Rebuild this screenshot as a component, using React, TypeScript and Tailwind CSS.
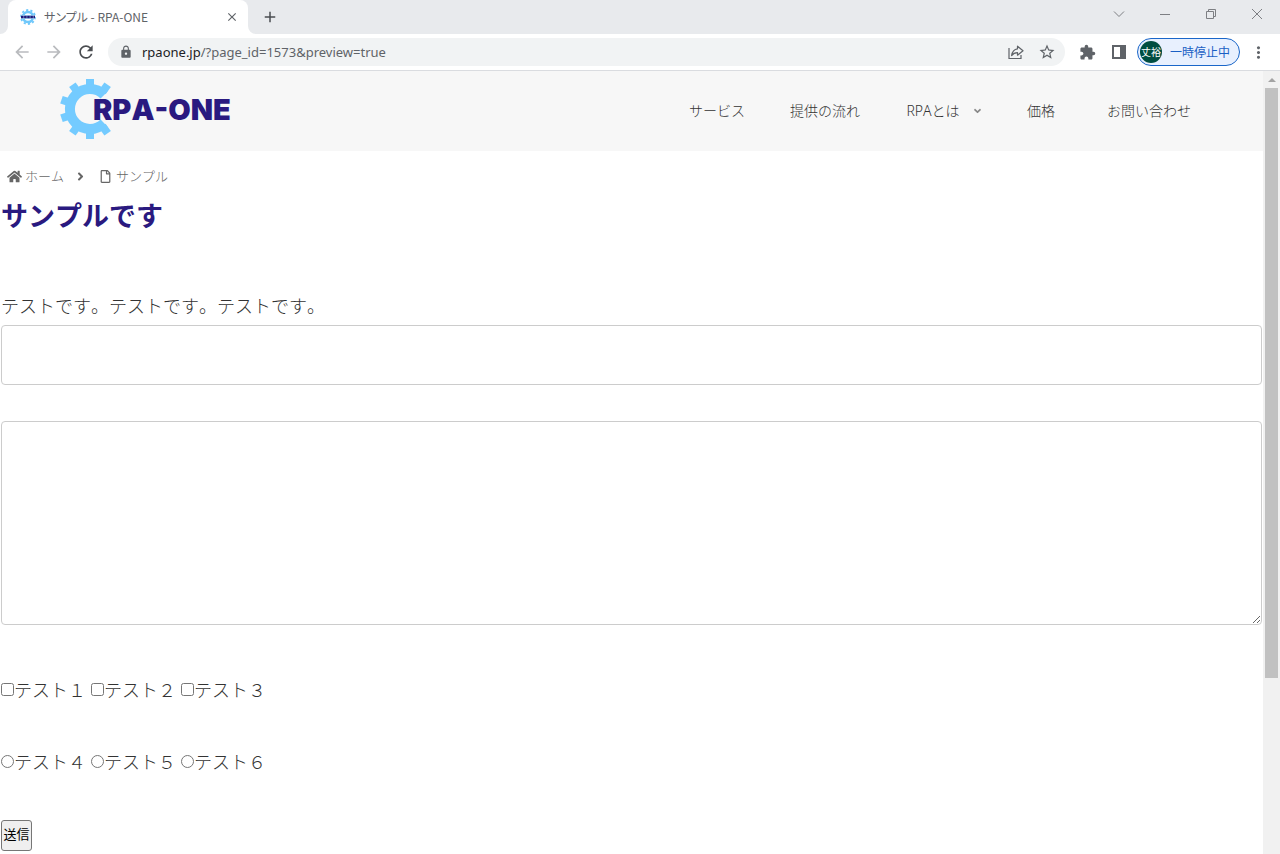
import React from "react";
import {
  MdArrowBack,
  MdArrowForward,
  MdRefresh,
  MdLock,
  MdStarBorder,
  MdExtension,
  MdMoreVert,
  MdAdd,
  MdClose,
} from "react-icons/md";
import { FaHome, FaAngleRight, FaAngleDown, FaRegFile } from "react-icons/fa";

const toothAngles = [36, 0, -36, -72, -108, -144, -180, -216];

const navItems = [
  { label: "サービス" },
  { label: "提供の流れ" },
  { label: "RPAとは", hasMenu: true },
  { label: "価格" },
  { label: "お問い合わせ" },
];

const Favicon = () => (
  <svg viewBox="0 0 16 16" className="h-4 w-4 shrink-0" aria-hidden="true">
    <circle cx="8" cy="8" r="5" fill="none" stroke="#6fc8fb" strokeWidth="2.6" />
    <circle
      cx="8"
      cy="8"
      r="7"
      fill="none"
      stroke="#6fc8fb"
      strokeWidth="1.8"
      strokeDasharray="2.2 2.2"
    />
    <rect x="1" y="6" width="14" height="4" fill="#a5daf5" />
    <path d="M1 8h14" stroke="#22197a" strokeWidth="2.6" strokeDasharray="2.6 0.5" />
  </svg>
);

const Logo = () => (
  <svg viewBox="0 0 174 62" className="h-[62px] w-[174px]" role="img" aria-label="RPA-ONE">
    <g fill="#74cbff">
      {toothAngles.map((angle) => (
        <rect
          key={angle}
          x="26"
          y="1"
          width="8"
          height="9"
          transform={`rotate(${angle} 30 31)`}
        />
      ))}
    </g>
    <path
      d="M44.1 16.9A20 20 0 1 0 44.1 45.1"
      fill="none"
      stroke="#74cbff"
      strokeWidth="10"
    />
    <text
      x="33"
      y="42"
      fill="#2a1a80"
      className="font-['Inter',sans-serif] text-[29px] font-black"
    >
      RPA-ONE
    </text>
  </svg>
);

const WindowControls = () => (
  <div className="ml-auto flex h-7 text-[#7d7f83]">
    <button type="button" aria-label="タブを検索" className="flex w-[46px] items-center justify-center">
      <svg width="12" height="12" fill="none" stroke="currentColor">
        <path d="M1 3.5l5 5 5-5" />
      </svg>
    </button>
    <button type="button" aria-label="最小化" className="flex w-[46px] items-center justify-center">
      <svg width="12" height="12" fill="none" stroke="currentColor">
        <path d="M1 6.5h10" />
      </svg>
    </button>
    <button type="button" aria-label="元に戻す" className="flex w-[46px] items-center justify-center">
      <svg width="12" height="12" fill="none" stroke="currentColor">
        <path d="M1.5 3.5h7v7h-7zM3.5 3.5v-2h7v7h-2" />
      </svg>
    </button>
    <button type="button" aria-label="閉じる" className="flex w-[46px] items-center justify-center">
      <svg width="12" height="12" fill="none" stroke="currentColor">
        <path d="M1 1l10 10M11 1L1 11" />
      </svg>
    </button>
  </div>
);

const TabBar = () => (
  <div className="flex h-[34px] bg-[#e8eaed] pl-2">
    <div className="relative flex w-60 items-center rounded-t-lg bg-white pr-2 pl-3 text-[#5f6368]">
      <svg className="absolute bottom-0 -left-2 h-2 w-2 fill-white" viewBox="0 0 8 8" aria-hidden="true">
        <path d="M8 0v8H0a8 8 0 0 0 8-8z" />
      </svg>
      <svg className="absolute -right-2 bottom-0 h-2 w-2 fill-white" viewBox="0 0 8 8" aria-hidden="true">
        <path d="M0 0v8h8a8 8 0 0 1-8-8z" />
      </svg>
      <Favicon />
      <span className="ml-2 font-['Noto_Sans_CJK_JP',sans-serif] text-xs [font-feature-settings:'palt']">
        サンプル - RPA-ONE
      </span>
      <button type="button" aria-label="タブを閉じる" className="ml-auto flex h-4 w-4 items-center justify-center">
        <MdClose size={14} />
      </button>
    </div>
    <button type="button" aria-label="新しいタブ" className="ml-3 flex w-5 items-center justify-center text-[#4a4d51]">
      <MdAdd size={18} />
    </button>
    <WindowControls />
  </div>
);

const Toolbar = () => (
  <div className="flex h-[37px] items-center border-b border-[#dadce0] bg-white pr-[6px] pl-[6px] text-[#5f6368]">
    <button type="button" aria-label="戻る" className="flex w-8 justify-center text-[#b9bbbe]">
      <MdArrowBack size={20} />
    </button>
    <button type="button" aria-label="進む" className="flex w-8 justify-center text-[#b9bbbe]">
      <MdArrowForward size={20} />
    </button>
    <button type="button" aria-label="再読み込み" className="flex w-8 justify-center text-[#4a4d51]">
      <MdRefresh size={20} />
    </button>
    <div className="mx-[6px] flex h-7 flex-1 items-center rounded-full bg-[#f1f3f4] pr-[9px] pl-[11px]">
      <MdLock size={14} />
      <a
        href="#"
        className="ml-[9px] pt-px font-['Noto_Sans',sans-serif] text-[13px] text-[#5f6368]"
      >
        <span className="text-[#202124]">rpaone.jp</span>/?page_id=1573&amp;preview=true
      </a>
      <button type="button" aria-label="共有" className="ml-auto">
        <svg width="16" height="16" fill="none" stroke="currentColor" strokeWidth="1.2">
          <path d="M1 4v10.5h12V11" />
          <path
            d="M9.5 2.2L15 6.8l-5.5 4.4V8.6C6.8 8.6 5 9.6 3.6 11.6 4.2 7.8 6.2 5.2 9.5 4.8z"
            strokeLinejoin="round"
          />
        </svg>
      </button>
      <button type="button" aria-label="ブックマーク" className="ml-[14px]">
        <MdStarBorder size={18} />
      </button>
    </div>
    <button type="button" aria-label="拡張機能" className="flex w-8 justify-center">
      <MdExtension size={17} />
    </button>
    <button type="button" aria-label="サイドパネル" className="flex w-8 justify-center">
      <svg width="14" height="14" fill="none" stroke="currentColor" strokeWidth="2">
        <path d="M1 1h12v12H1z" />
        <path d="M9 1h4v12H9z" fill="currentColor" />
      </svg>
    </button>
    <button
      type="button"
      className="ml-[2px] flex h-7 w-[103px] items-center rounded-full border border-[#1a66c9] bg-[#e8f0fe] pl-[2px] font-['Noto_Sans_CJK_JP',sans-serif] text-xs text-[#1a5fc4]"
    >
      <span className="flex h-[22px] w-[22px] items-center justify-center rounded-full bg-[#004d40] text-[10px] text-white">
        丈裕
      </span>
      <span className="ml-2">一時停止中</span>
    </button>
    <button type="button" aria-label="メニュー" className="ml-[2px] flex w-8 justify-center">
      <MdMoreVert size={19} />
    </button>
  </div>
);

const SiteHeader = () => (
  <header className="flex h-20 items-center justify-between bg-[#f7f7f7] px-[60px]">
    <a href="#" className="-mt-1">
      <Logo />
    </a>
    <nav className="grid grid-cols-[repeat(5,108px)] text-center font-['Noto_Sans','Noto_Sans_CJK_JP',sans-serif] text-sm">
      {navItems.map((item) => (
        <a key={item.label} href="#" className="relative">
          {item.label}
          {item.hasMenu && (
            <FaAngleDown
              size={11}
              className="absolute top-1/2 right-1 -translate-y-1/2 text-[#888]"
            />
          )}
        </a>
      ))}
    </nav>
  </header>
);

const Breadcrumb = () => (
  <nav aria-label="パンくず" className="flex h-6 items-center pl-[6px] text-[13px] text-[#666]">
    <FaHome size={15} />
    <a href="#" className="ml-[3px]">
      ホーム
    </a>
    <FaAngleRight size={13} className="mx-[10px]" />
    <FaRegFile size={13} className="ml-[2px]" />
    <span className="ml-1">サンプル</span>
  </nav>
);

const SampleForm = () => (
  <form onSubmit={(e) => e.preventDefault()}>
    <input
      type="text"
      aria-label="テキスト"
      className="mt-1 block h-[60px] w-full rounded border border-[#ccc] bg-white px-3"
    />
    <textarea
      aria-label="本文"
      className="mt-9 block h-[204px] w-full rounded border border-[#ccc] bg-white px-3 py-2"
    />
    <div className="mt-12 flex h-8 items-center gap-[5px]">
      {["１", "２", "３"].map((n) => (
        <label key={n} className="flex items-center">
          <input type="checkbox" name="check" value={n} className="h-[13px] w-[13px]" />
          テスト{n}
        </label>
      ))}
    </div>
    <div className="mt-10 flex h-8 items-center gap-[5px]">
      {["４", "５", "６"].map((n) => (
        <label key={n} className="flex items-center">
          <input type="radio" name="radio" value={n} className="h-[13px] w-[13px]" />
          テスト{n}
        </label>
      ))}
    </div>
    <button
      type="submit"
      className="mt-[43px] flex h-[31px] w-[31px] items-center justify-center rounded-[3px] border border-[#767676] bg-[#efefef] pb-[3px] text-[13px] font-normal whitespace-nowrap text-black"
    >
      送信
    </button>
  </form>
);

const Scrollbar = () => (
  <div className="flex w-[17px] shrink-0 flex-col bg-[#f1f1f1] px-[2px]" aria-hidden="true">
    <div className="flex h-[17px] items-center justify-center">
      <svg width="8" height="4" className="fill-[#a3a3a3]">
        <path d="M0 4l4-4 4 4z" />
      </svg>
    </div>
    <div className="grow-[77] bg-[#c1c1c1]" />
    <div className="grow-[23]" />
  </div>
);

const App = () => {
  return (
    <div className="flex min-h-screen flex-col bg-white">
      <TabBar />
      <Toolbar />
      <div className="flex flex-1">
        <div className="min-w-0 flex-1 font-['Noto_Sans_CJK_JP',sans-serif] font-light text-[#333] [font-kerning:none]">
          <SiteHeader />
          <main className="px-px pt-[13px] pb-[3px] text-lg leading-8">
            <Breadcrumb />
            <h1 className="mt-[9px] text-[27px] leading-9 font-bold text-[#2a1a80]">
              サンプルです
            </h1>
            <p className="mt-14">テストです。テストです。テストです。</p>
            <SampleForm />
          </main>
        </div>
        <Scrollbar />
      </div>
    </div>
  );
};

export default App;
